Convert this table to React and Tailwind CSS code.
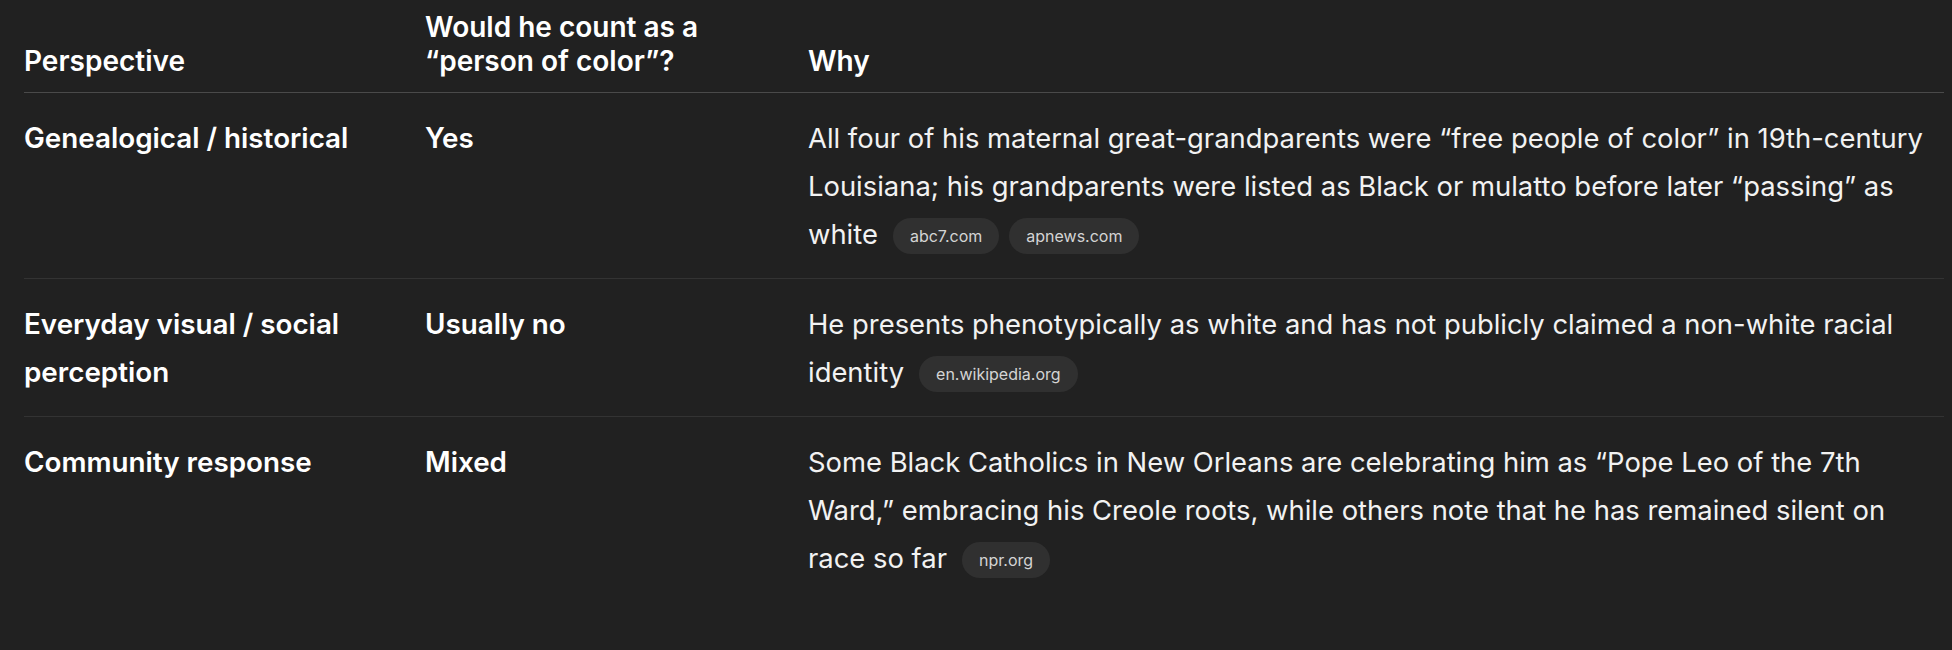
const rows = [
  {
    perspective: 'Genealogical / historical',
    answer: 'Yes',
    why: 'All four of his maternal great-grandparents were \u201cfree people of color\u201d in 19th-century Louisiana; his grandparents were listed as Black or mulatto before later \u201cpassing\u201d as white',
    sources: ['abc7.com', 'apnews.com'],
  },
  {
    perspective: 'Everyday visual / social perception',
    answer: 'Usually no',
    why: 'He presents phenotypically as white and has not publicly claimed a non-white racial identity',
    sources: ['en.wikipedia.org'],
  },
  {
    perspective: 'Community response',
    answer: 'Mixed',
    why: 'Some Black Catholics in New Orleans are celebrating him as \u201cPope Leo of the 7th Ward,\u201d embracing his Creole roots, while others note that he has remained silent on race so far',
    sources: ['npr.org'],
  },
];

function Chip({ label }) {
  return (
    <span className="ml-[10px] first:ml-[15px] inline-flex h-[36px] items-center rounded-full bg-[#303030] px-[17px] align-middle text-[16px] leading-none text-[#d4d4d4] relative -top-[1px]">
      {label}
    </span>
  );
}

export default function App() {
  return (
    <div className="min-h-[650px] w-full bg-[#212121] pl-[24px] pr-[8px] pt-[10px] text-white" style={{ fontFamily: 'Inter, "Noto Sans", sans-serif' }}>
      <div className="grid grid-cols-[401px_383px_1fr] items-end border-b border-[#4a4a4a] pb-[14px] text-[28px] font-semibold leading-[34px] text-white">
        <div className="pr-4">Perspective</div>
        <div className="pr-4">Would he count as a<br />{'\u201cperson of color\u201d?'}</div>
        <div className="pr-4">Why</div>
      </div>
      {rows.map((r, idx) => (
        <div
          key={r.perspective}
          className={`grid grid-cols-[401px_383px_1fr] pt-[21px] pb-[20px] text-[27.4px] leading-[48px] ${idx < rows.length - 1 ? 'border-b border-[#333333]' : ''}`}
        >
          <div className="pr-4 text-[27.8px] font-semibold text-white">{r.perspective}</div>
          <div className="pr-4 text-[27.8px] font-semibold text-white">{r.answer}</div>
          <div className="pr-[14px] text-[#f2f2f2]">
            {r.why}
            <span className="whitespace-nowrap">
              {r.sources.map(s => <Chip key={s} label={s} />)}
            </span>
          </div>
        </div>
      ))}
    </div>
  );
}
